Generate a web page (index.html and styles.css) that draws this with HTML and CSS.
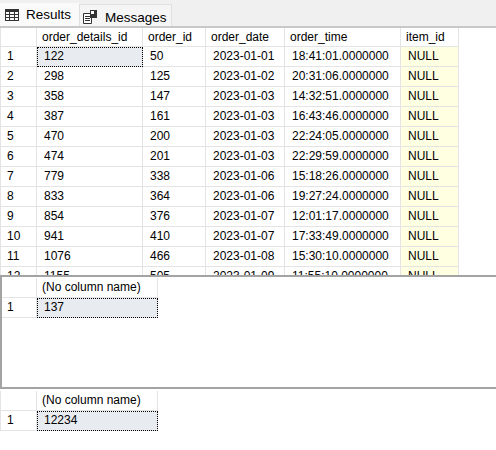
FILE: index.html
```html
<!DOCTYPE html>
<html>
<head>
<meta charset="utf-8">
<link rel="stylesheet" href="styles.css">
</head>
<body>
<div class="tabs">
  <div class="tab tab-results">
    <svg class="ico" width="14" height="12" viewBox="0 0 14 12">
      <rect x="0.5" y="0.5" width="13" height="11" fill="none" stroke="#333"/>
      <rect x="0" y="0" width="14" height="3" fill="#333"/>
      <path d="M0 5.5H14M0 8.5H14M4.5 0V12M9.5 0V12" stroke="#333"/>
    </svg>
    <span>Results</span>
  </div>
  <div class="tab tab-messages">
    <svg class="ico" width="14" height="14" viewBox="0 0 14 14">
      <path d="M0.5 3.5h8v10h-8z" fill="#fff" stroke="#333"/>
      <path d="M2 6.5h5M2 8.5h5M2 10.5h5" stroke="#333"/>
      <rect x="7" y="0" width="7" height="8" fill="#333"/>
      <rect x="8" y="1" width="3" height="3" fill="#fff"/>
    </svg>
    <span>Messages</span>
  </div>
</div>

<div class="pane pane-main">
  <div class="row head head-main">
    <div class="cell rn"></div>
    <div class="cell w1">order_details_id</div>
    <div class="cell w2">order_id</div>
    <div class="cell w3">order_date</div>
    <div class="cell w4">order_time</div>
    <div class="cell w5">item_id</div>
  </div>
  <div class="row"><div class="cell rn">1</div><div class="cell w1 sel">122</div><div class="cell w2">50</div><div class="cell w3">2023-01-01</div><div class="cell w4">18:41:01.0000000</div><div class="cell w5 null">NULL</div></div>
  <div class="row"><div class="cell rn">2</div><div class="cell w1">298</div><div class="cell w2">125</div><div class="cell w3">2023-01-02</div><div class="cell w4">20:31:06.0000000</div><div class="cell w5 null">NULL</div></div>
  <div class="row"><div class="cell rn">3</div><div class="cell w1">358</div><div class="cell w2">147</div><div class="cell w3">2023-01-03</div><div class="cell w4">14:32:51.0000000</div><div class="cell w5 null">NULL</div></div>
  <div class="row"><div class="cell rn">4</div><div class="cell w1">387</div><div class="cell w2">161</div><div class="cell w3">2023-01-03</div><div class="cell w4">16:43:46.0000000</div><div class="cell w5 null">NULL</div></div>
  <div class="row"><div class="cell rn">5</div><div class="cell w1">470</div><div class="cell w2">200</div><div class="cell w3">2023-01-03</div><div class="cell w4">22:24:05.0000000</div><div class="cell w5 null">NULL</div></div>
  <div class="row"><div class="cell rn">6</div><div class="cell w1">474</div><div class="cell w2">201</div><div class="cell w3">2023-01-03</div><div class="cell w4">22:29:59.0000000</div><div class="cell w5 null">NULL</div></div>
  <div class="row"><div class="cell rn">7</div><div class="cell w1">779</div><div class="cell w2">338</div><div class="cell w3">2023-01-06</div><div class="cell w4">15:18:26.0000000</div><div class="cell w5 null">NULL</div></div>
  <div class="row"><div class="cell rn">8</div><div class="cell w1">833</div><div class="cell w2">364</div><div class="cell w3">2023-01-06</div><div class="cell w4">19:27:24.0000000</div><div class="cell w5 null">NULL</div></div>
  <div class="row"><div class="cell rn">9</div><div class="cell w1">854</div><div class="cell w2">376</div><div class="cell w3">2023-01-07</div><div class="cell w4">12:01:17.0000000</div><div class="cell w5 null">NULL</div></div>
  <div class="row"><div class="cell rn">10</div><div class="cell w1">941</div><div class="cell w2">410</div><div class="cell w3">2023-01-07</div><div class="cell w4">17:33:49.0000000</div><div class="cell w5 null">NULL</div></div>
  <div class="row"><div class="cell rn">11</div><div class="cell w1">1076</div><div class="cell w2">466</div><div class="cell w3">2023-01-08</div><div class="cell w4">15:30:10.0000000</div><div class="cell w5 null">NULL</div></div>
  <div class="row"><div class="cell rn">12</div><div class="cell w1">1155</div><div class="cell w2">505</div><div class="cell w3">2023-01-09</div><div class="cell w4">11:55:10.0000000</div><div class="cell w5 null">NULL</div></div>
</div>

<div class="pane pane-mid">
  <div class="row head">
    <div class="cell rn rn-mid"></div>
    <div class="cell wn">(No column name)</div>
  </div>
  <div class="row"><div class="cell rn rn-mid">1</div><div class="cell wn sel">137</div></div>
</div>

<div class="pane pane-last">
  <div class="row head">
    <div class="cell rn"></div>
    <div class="cell wn">(No column name)</div>
  </div>
  <div class="row"><div class="cell rn">1</div><div class="cell wn sel">12234</div></div>
</div>
</body>
</html>
```

FILE: styles.css
```css
html, body {
  margin: 0;
  padding: 0;
}

body {
  width: 496px;
  height: 450px;
  overflow: hidden;
  background: #ffffff;
  color: #000000;
  font-family: "Liberation Sans", Arial, sans-serif;
  font-size: 12px;
}

.tabs {
  display: flex;
  align-items: flex-end;
  height: 26px;
  background: #f0f0f0;
  border-bottom: 2px solid #c8c8c8;
}

.tab {
  display: flex;
  align-items: center;
  box-sizing: border-box;
  font-size: 13.5px;
  color: #000;
}

.tab-results {
  width: 79px;
  height: 23px;
  padding-left: 5px;
  gap: 7px;
  background: #fafafa;
}

.tab-messages {
  width: 93px;
  height: 22px;
  padding: 3px 0 0 3px;
  gap: 8px;
  background: #f5f5f5;
  border: 1px solid #e0e0e0;
  border-bottom: none;
}

.ico {
  flex: none;
  display: block;
}

.pane {
  overflow: hidden;
}

.pane-main {
  height: 247px;
}

.pane-mid {
  height: 109px;
  padding-top: 1px;
  border-top: 2px solid #a3a3a3;
  border-bottom: 2px solid #a3a3a3;
  border-left: 2px solid #a3a3a3;
}

.pane-last {
  height: 59px;
  padding-top: 2px;
}

.row {
  display: flex;
}

.cell {
  flex: none;
  box-sizing: border-box;
  height: 20px;
  line-height: 19px;
  padding-left: 7px;
  border-right: 1px solid #e4e4e4;
  border-bottom: 1px solid #e4e4e4;
  white-space: nowrap;
  overflow: hidden;
}

.head .cell {
  padding-left: 5px;
}

.head-main .cell {
  height: 19px;
  line-height: 18px;
}

.rn {
  width: 37px;
  padding-left: 6px;
  border-left: 1px solid #e4e4e4;
}

.head .rn {
  padding-left: 6px;
}

.rn-mid {
  width: 35px;
  padding-left: 5px;
  border-left: none;
}

.w1 { width: 106px; }
.w2 { width: 63px; }
.w3 { width: 79px; }
.w4 { width: 116px; }
.w5 { width: 58px; }
.wn { width: 121px; }

.sel {
  background: #e8ecf0;
  outline: 1px dotted #000;
  outline-offset: -1px;
}

.null {
  background: #ffffe1;
}
```
